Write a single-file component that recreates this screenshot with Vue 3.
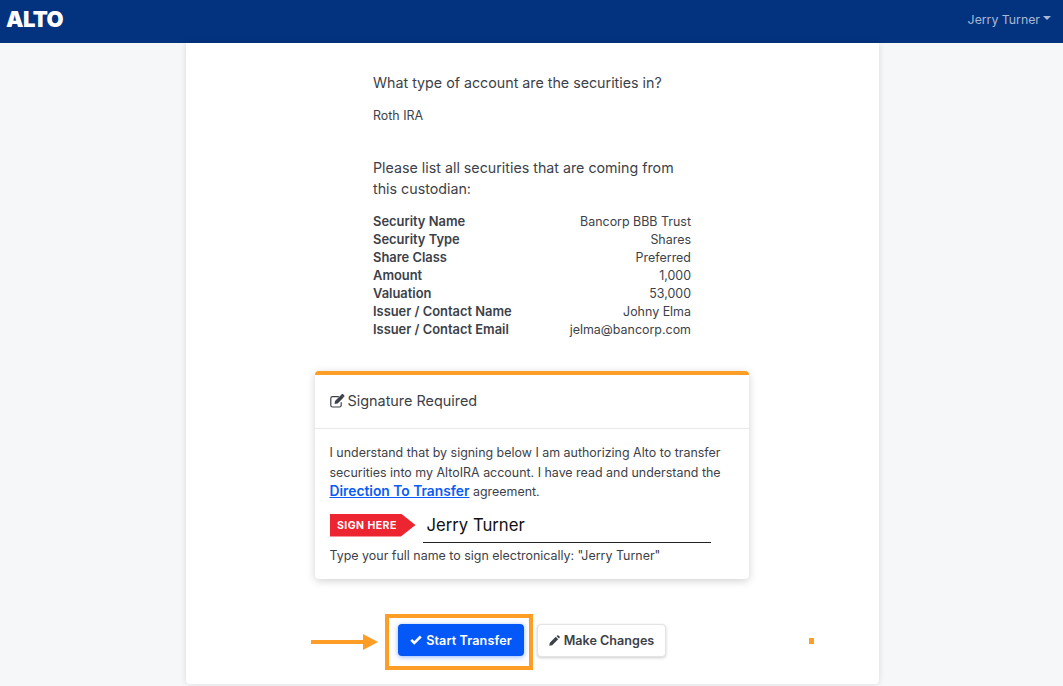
<script setup>
const rows = [
  ['Security Name', 'Bancorp BBB Trust'],
  ['Security Type', 'Shares'],
  ['Share Class', 'Preferred'],
  ['Amount', '1,000'],
  ['Valuation', '53,000'],
  ['Issuer / Contact Name', 'Johny Elma'],
  ['Issuer / Contact Email', 'jelma@bancorp.com'],
]
</script>

<template>
  <div class="page">
    <header class="nav">
      <span class="logo">ALTO</span>
      <span class="user">Jerry Turner<i class="caret"></i></span>
    </header>
    <main class="card">
      <section class="col">
        <h2 class="q">What type of account are the securities in?</h2>
        <p class="ans">Roth IRA</p>
        <h2 class="q q2">Please list all securities that are coming from this custodian:</h2>
        <dl class="list">
          <div v-for="r in rows" :key="r[0]" class="row">
            <dt>{{ r[0] }}</dt>
            <dd>{{ r[1] }}</dd>
          </div>
        </dl>
      </section>
      <section class="sig">
        <div class="sig-head">
          <svg class="edit" viewBox="0 0 15 14" width="15" height="14">
            <path d="M11.2 8.2v3a1.8 1.8 0 0 1-1.8 1.8H2.6A1.8 1.8 0 0 1 .8 11.2V4.4a1.8 1.8 0 0 1 1.8-1.8h6.2" fill="none" stroke="#3c4149" stroke-width="1.2"/>
            <path d="M5 6.9L11 .9l2.6 2.6-6 6-3 .4zM11.7.3l.6-.3.6.1 1.4 1.4.2.7-.3.5-.6.6L11 .9z" fill="#3c4149"/>
          </svg>
          <span>Signature Required</span>
        </div>
        <div class="sig-body">
          <p class="legal">I understand that by signing below I am authorizing Alto to transfer securities into my AltoIRA account. I have read and understand the <a class="link">Direction To Transfer</a> agreement.</p>
          <div class="sign-row">
            <span class="tag">SIGN HERE</span>
            <span class="name">Jerry Turner</span>
          </div>
          <p class="hint">Type your full name to sign electronically: "Jerry Turner"</p>
        </div>
      </section>
      <div class="actions">
        <div class="hl">
          <button class="btn primary">
            <svg viewBox="0 0 14 11" width="12" height="10"><path d="M1.4 5.4l3.6 3.6 7.6-7.6" fill="none" stroke="#fff" stroke-width="3"/></svg>
            Start Transfer
          </button>
        </div>
        <button class="btn ghost">
          <svg viewBox="0 0 12 12" width="11" height="11"><path d="M0.3 11.7l.6-3.2L7.4 2l2.6 2.6-6.5 6.5zM8.2 1.2l.7-.7a1.1 1.1 0 0 1 1.5 0l1.1 1.1a1.1 1.1 0 0 1 0 1.5l-.7.7z" fill="#3c4149"/></svg>
          Make Changes
        </button>
        <div class="arrow"><i></i><b></b></div>
        <i class="dot"></i>
      </div>
    </main>
  </div>
</template>

<style>
html, body { margin: 0; background: #f6f7f9; }
</style>

<style scoped>
.page { width: 1063px; height: 686px; overflow: hidden; font-family: Inter, "Liberation Sans", sans-serif; color: #3c4149; font-size: 12.45px; display: flex; flex-direction: column; }
.nav { height: 43px; flex: none; background: #03337f; display: flex; align-items: center; justify-content: space-between; padding: 0 12px 5px 6px; box-sizing: border-box; }
.logo { color: #fff; font-weight: 900; font-size: 22px; letter-spacing: -.6px; line-height: 28px; }
.user { color: #a9b8d4; font-size: 12.3px; display: flex; align-items: center; }
.caret { display: inline-block; margin-left: 3px; margin-top: -2px; border: 4px solid transparent; border-top-color: #a9b8d4; border-bottom: 0; }
.card { width: 693px; margin: 0 0 2px 186px; flex: 1; background: #fff; box-shadow: 0 0 6px rgba(0, 0, 0, .12); border-radius: 0 0 4px 4px; box-sizing: border-box; position: relative; display: flex; flex-direction: column; align-items: center; padding-top: 29px; }
.col { width: 318px; margin-left: -1px; }
.q { font-size: 14.25px; line-height: 21px; font-weight: 400; margin: 0; color: #3c4149; }
.ans { margin: 13px 0 0; line-height: 20px; }
.q2 { margin-top: 31px; padding-right: 12px; }
.list { margin: 14px 0 0; }
.row { display: flex; justify-content: space-between; line-height: 18px; }
dt { font-weight: 600; font-size: 12.9px; }
dd { margin: 0; }
.sig { width: 434px; height: 208px; margin: 32px 0 0 -2px; background: #fff; border-top: 4px solid #ff9e27; border-radius: 4px; box-shadow: 0 2px 8px rgba(0, 0, 0, .18); box-sizing: border-box; }
.sig-head { height: 54px; border-bottom: 1px solid #e8e9eb; display: flex; align-items: center; gap: 3px; padding: 0 15px 2px; font-size: 14.4px; box-sizing: border-box; }
.sig-body { padding: 14px 15px; }
.legal { margin: 0; line-height: 19.5px; }
.link { color: #0a5cf5; font-weight: 600; font-size: 13.8px; text-decoration: underline; }
.sign-row { display: flex; align-items: flex-end; margin-top: 9px; }
.tag { width: 86px; height: 23px; background: #ec2530; color: #fff; font-size: 10.5px; font-weight: 700; letter-spacing: .45px; display: flex; align-items: center; padding-left: 7.5px; box-sizing: border-box; clip-path: polygon(0 0, 83% 0, 100% 50%, 83% 100%, 0 100%); margin-bottom: 6px; }
.name { width: 288px; margin-left: 7px; border-bottom: 1.5px solid #222; color: #111; font-size: 16.7px; line-height: 28px; padding: 0 4px 3px; box-sizing: border-box; }
.hint { margin: 4px 0 0; line-height: 18px; }
.actions { position: relative; width: 100%; display: flex; align-items: center; margin-top: 35px; padding-left: 199px; box-sizing: border-box; gap: 4px; }
.hl { border: 4px solid #ff9e27; width: 148px; height: 56px; box-sizing: border-box; display: flex; align-items: center; padding: 0 0 4px 9px; }
.btn { height: 32px; border-radius: 4px; font: 600 12.6px Inter, sans-serif; letter-spacing: .1px; border: 0; display: inline-flex; align-items: center; justify-content: center; gap: 4px; padding: 0; }
.primary { width: 126px; flex: none; background: #0558f8; color: #fff; box-shadow: 0 1px 5px rgba(10, 92, 245, .45); }
.ghost { width: 129px; height: 33px; margin-bottom: 4px; background: #fff; color: #3c4149; border: 1px solid #e3e4e6; box-shadow: 0 1px 3px rgba(0, 0, 0, .2); letter-spacing: 0; }
.arrow { position: absolute; left: 125px; top: 20px; display: flex; align-items: center; }
.arrow i { width: 52px; height: 4px; background: #ff9e27; }
.arrow b { border-left: 15px solid #ff9e27; border-top: 8px solid transparent; border-bottom: 8px solid transparent; }
.dot { position: absolute; left: 623px; top: 24px; width: 5px; height: 6px; background: #ff9e27; }
</style>
